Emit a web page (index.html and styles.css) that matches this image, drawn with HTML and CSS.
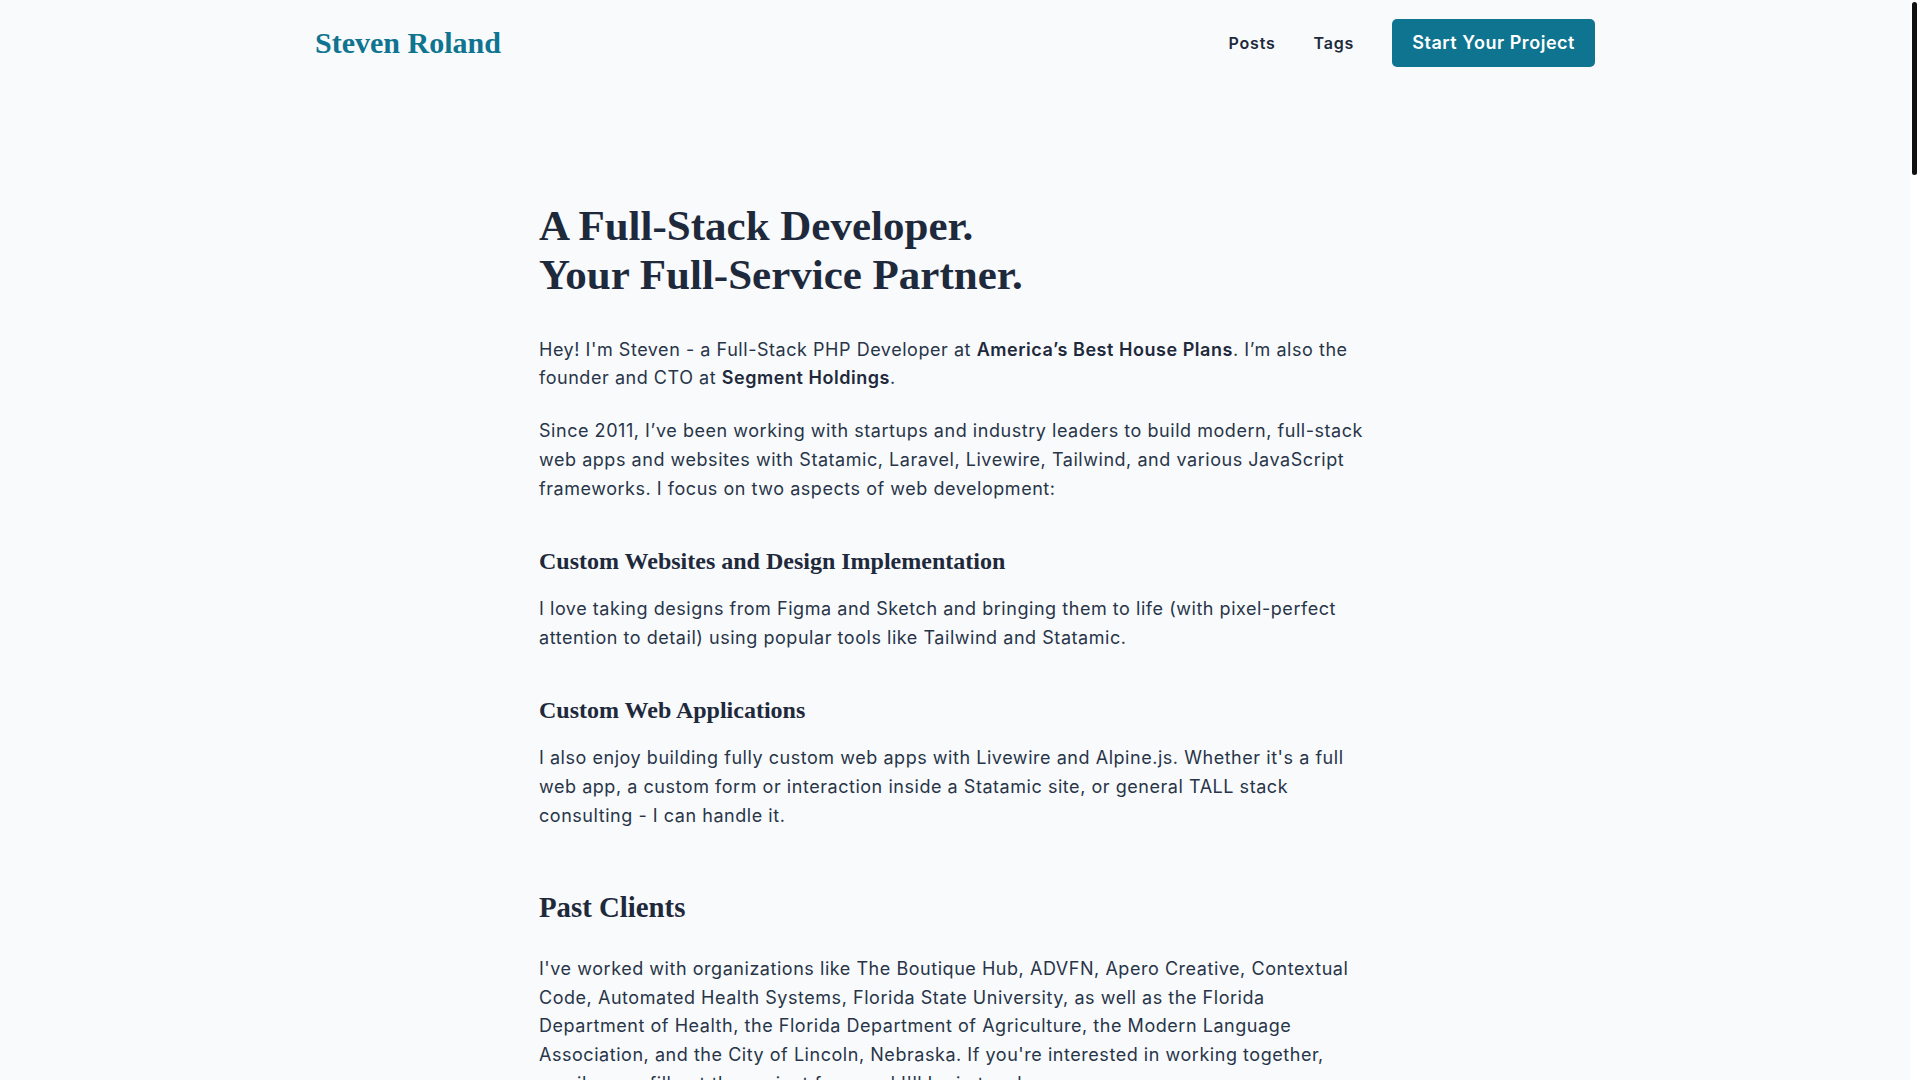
FILE: index.html
```html
<!DOCTYPE html>
<html lang="en">
<head>
<meta charset="utf-8">
<title>Steven Roland</title>
<link rel="stylesheet" href="styles.css">
</head>
<body>
<div class="page">
  <header class="site-header">
    <a class="logo" href="#">Steven Roland</a>
    <nav class="nav">
      <a class="nav-link" href="#">Posts</a>
      <a class="nav-link" href="#">Tags</a>
      <a class="cta" href="#">Start Your Project</a>
    </nav>
  </header>
  <main class="main">
    <article class="prose">
      <h1>A Full-Stack Developer.<br>Your Full-Service Partner.</h1>
      <p>Hey! I'm Steven - a Full-Stack PHP Developer at <strong>America’s Best House Plans</strong>. I’m also the founder and CTO at <strong>Segment Holdings</strong>.</p>
      <p>Since 2011, I’ve been working with startups and industry leaders to build modern, full-stack web apps and websites with Statamic, Laravel, Livewire, Tailwind, and various JavaScript frameworks. I focus on two aspects of web development:</p>
      <h3>Custom Websites and Design Implementation</h3>
      <p>I love taking designs from Figma and Sketch and bringing them to life (with pixel-perfect attention to detail) using popular tools like Tailwind and Statamic.</p>
      <h3>Custom Web Applications</h3>
      <p>I also enjoy building fully custom web apps with Livewire and Alpine.js. Whether it's a full web app, a custom form or interaction inside a Statamic site, or general TALL stack consulting - I can handle it.</p>
      <h2>Past Clients</h2>
      <p>I've worked with organizations like The Boutique Hub, ADVFN, Apero Creative, Contextual Code, Automated Health Systems, Florida State University, as well as the Florida Department of Health, the Florida Department of Agriculture, the Modern Language Association, and the City of Lincoln, Nebraska. If you're interested in working together, email me or fill out the project form and I'll be in touch.</p>
    </article>
  </main>
</div>
<div class="scrollbar" aria-hidden="true"><div class="scrollbar-thumb"></div></div>
</body>
</html>
```
FILE: styles.css
```css
html {
  background: #f8fafc;
}
body {
  margin: 0;
  padding-right: 10px;
  background: #f8fafc;
  font-family: Inter, "Noto Sans", sans-serif;
  color: #283548;
}
a {
  text-decoration: none;
}
.page {
  padding-bottom: 200px;
}
.site-header {
  max-width: 1280px;
  margin: 0 auto;
  padding: 19px 0;
  display: flex;
  align-items: center;
  justify-content: space-between;
}
.logo {
  font-family: "Liberation Serif", "Times New Roman", serif;
  font-weight: 700;
  font-size: 30px;
  line-height: 36px;
  color: #0e7490;
}
.nav {
  display: flex;
  align-items: center;
  gap: 38px;
}
.nav-link {
  font-size: 16px;
  line-height: 24px;
  font-weight: 600;
  letter-spacing: 0.05em;
  color: #1e293b;
}
.cta {
  display: block;
  background: #0e7490;
  color: #ffffff;
  font-size: 18px;
  line-height: 28px;
  font-weight: 600;
  letter-spacing: 0.03em;
  padding: 10px 20px;
  border-radius: 5px;
}
.main {
  max-width: 896px;
  margin: 0 auto;
  padding: 115px 32px 0;
  box-sizing: border-box;
}
.prose {
  font-size: 18px;
  line-height: 28.8px;
  letter-spacing: 0.03em;
  color: #283548;
}
.prose h1,
.prose h2,
.prose h3 {
  font-family: "Liberation Serif", "Times New Roman", serif;
  font-weight: 700;
  letter-spacing: 0;
  color: #1e293b;
}
.prose h1 {
  font-size: 43px;
  line-height: 49px;
  margin: 0 0 36.5px;
}
.prose h2 {
  font-size: 28.8px;
  line-height: 38.4px;
  margin: 58px 0 28px;
}
.prose h3 {
  font-size: 24px;
  line-height: 32px;
  margin: 41.5px 0 18px;
}
.prose p {
  margin: 0 0 24px;
}
.prose strong {
  font-weight: 600;
  color: #1e293b;
}
.scrollbar {
  position: fixed;
  top: 0;
  right: 0;
  width: 10px;
  height: 100vh;
  background: #ffffff;
}
.scrollbar-thumb {
  position: absolute;
  top: 2px;
  left: 2px;
  width: 5px;
  height: 173px;
  border-radius: 3px;
  background: #111111;
}
```
